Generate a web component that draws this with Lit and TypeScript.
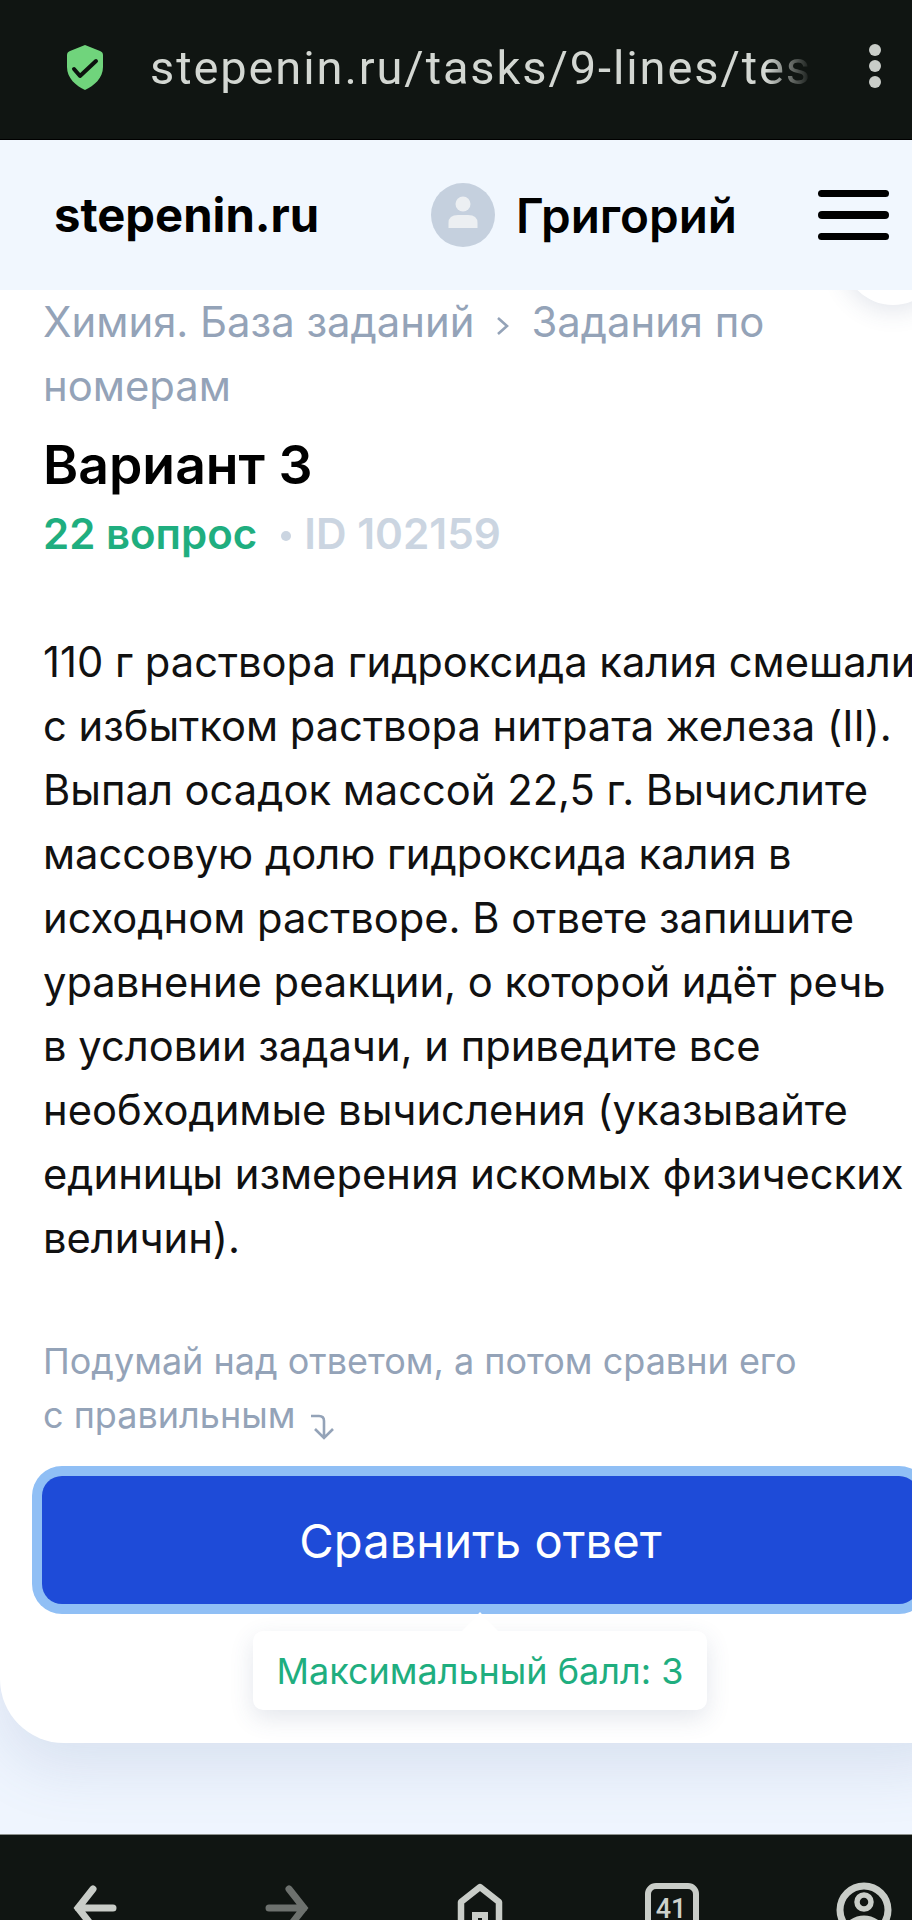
import { LitElement, html, css } from "lit";
import { customElement } from "lit/decorators.js";

@customElement("app-root")
export class AppRoot extends LitElement {
  static styles = css`
    :host { display: block; width: 912px; height: 1920px; overflow: hidden; font-family: Inter, "Noto Sans", sans-serif; background: #eff5fe; }
    .page { display: flex; flex-direction: column; width: 912px; height: 1920px; overflow: hidden; }
    .top { flex: none; height: 140px; box-sizing: border-box; background: #101512; border-bottom: 1px solid #000; display: flex; align-items: center; padding: 0 0 0 67px; position: relative; z-index: 3; }
    .shield { width: 36px; height: 45px; flex: none; margin-top: -4px; }
    .url { margin-left: 47px; width: 662px; overflow: hidden; white-space: nowrap; font: 400 47px/60px Roboto, sans-serif; color: #d3d7d2; letter-spacing: 1.9px; margin-top: -4px;
      -webkit-mask-image: linear-gradient(90deg, #000 93%, transparent 100%); mask-image: linear-gradient(90deg, #000 93%, transparent 100%); }
    .dots { margin-left: 57px; display: flex; flex-direction: column; gap: 4px; margin-top: -8px; }
    .dots i { width: 12px; height: 12px; border-radius: 50%; background: #c9cdc8; display: block; }
    .head { flex: none; height: 150px; box-sizing: border-box; background: #f1f7fe; display: flex; align-items: center; padding: 0 23px 0 54px; position: relative; z-index: 2; color: #000; }
    .logo { font-weight: 700; font-size: 47.2px; flex: none; margin-top: -2px; }
    .user { margin-left: auto; display: flex; align-items: center; gap: 21px; font-weight: 600; font-size: 47.6px; }
    .avatar { width: 64px; height: 64px; border-radius: 50%; background: #c5d0de; }
    .avatar svg { display: block; width: 64px; height: 64px; }
    .burger { margin-left: 81px; width: 71px; display: flex; flex-direction: column; gap: 14px; }
    .burger i { display: block; height: 7.5px; border-radius: 4px; background: #000; }
    .main { flex: 1; min-height: 0; position: relative; }
    .card { position: relative; width: 972px; height: 1453px; box-sizing: border-box; background: #fff; border-radius: 0 0 64px 64px; padding: 0 0 0 43px; box-shadow: 0 24px 60px rgba(100,125,170,.16); white-space: nowrap; }
    .fab { position: absolute; right: 29px; top: -85px; width: 100px; height: 100px; border-radius: 50%; background: #fff; box-shadow: 0 6px 24px rgba(60,80,120,.14); }
    .crumbs { font-size: 41.8px; line-height: 64px; color: #94a3b8; }
    .crumbs svg { width: 14px; height: 22px; margin: 0 21px 0 22px; }
    h1 { margin: 15px 0 0; font-size: 53.5px; line-height: 64px; font-weight: 600; color: #000; }
    .meta { margin-top: 7px; font-size: 42px; line-height: 60px; font-weight: 600; color: #1fae7f; display: flex; align-items: center; }
    .meta i { display: block; width: 10px; height: 10px; border-radius: 50%; background: #cbd5e1; margin: 3px 13px 0 24px; }
    .meta span { color: #cbd5e1; font-size: 42.3px; }
    .task { margin: 66px 0 0; font-size: 41.7px; line-height: 64px; color: #111; font-weight: 400; }
    .hint { margin: 64px 0 0; font-size: 36px; line-height: 54px; color: #94a3b8; }
    .hint svg { width: 26px; height: 26px; vertical-align: -12px; margin-left: 14px; }
    .btn { display: flex; align-items: center; justify-content: center; margin: 34px 0 0 -1px; width: 877px; height: 128px; box-sizing: border-box; border-radius: 20px; background: #1e4bd8; box-shadow: 0 0 0 10px #90bff5; color: #fff; font-size: 47.2px; font-weight: 400; }
    .tip { position: absolute; left: 253px; top: 1341px; width: 454px; height: 79px; box-sizing: border-box; border-radius: 10px; background: #fff; box-shadow: 0 8px 24px rgba(60,80,120,.14); display: flex; align-items: center; justify-content: center; color: #1fae7f; font-size: 36px; }
    .tip::before { content: ""; position: absolute; left: 209px; top: -19px; border: solid transparent; border-width: 0 18px 19px; border-bottom-color: #fff; }
    .bottom { flex: none; height: 86px; box-sizing: border-box; background: #101512; border-top: 1px solid #8d918e; position: relative; z-index: 3; overflow: hidden; }
    .bottom svg { display: block; width: 912px; height: 85px; }
    .num { font: 500 27px Roboto, sans-serif; fill: #cdd1cc; }
  `;

  render() {
    return html`
      <div class="page">
        <div class="top">
          <svg class="shield" viewBox="0 0 36 45">
            <path d="M18 0 L33 6 Q36 7 36 10 V22 C36 33 27 41 18 45 C9 41 0 33 0 22 V10 Q0 7 3 6 Z" fill="#70d47c"/>
            <path d="M7 24 L13 31 L29 16" fill="none" stroke="#0c120e" stroke-width="4" stroke-linecap="round" stroke-linejoin="round"/>
          </svg>
          <div class="url">stepenin.ru/tasks/9-lines/tes</div>
          <div class="dots"><i></i><i></i><i></i></div>
        </div>
        <div class="head">
          <div class="logo">stepenin.ru</div>
          <div class="user">
            <div class="avatar">
              <svg viewBox="0 0 64 64"><circle cx="32" cy="21" r="7.5" fill="#eceff2"/><path d="M17.5 45 V40 Q17.5 32 27 32 H37 Q46.5 32 46.5 40 V45 Z" fill="#eceff2"/></svg>
            </div>
            <span>Григорий</span>
          </div>
          <div class="burger"><i></i><i></i><i></i></div>
        </div>
        <div class="main">
          <div class="card">
            <div class="fab"></div>
            <div class="crumbs">Химия. База заданий<svg viewBox="0 0 14 22"><path d="M2 3 L11 11 L2 19" fill="none" stroke="#94a3b8" stroke-width="2.6"/></svg>Задания по<br>номерам</div>
            <h1>Вариант 3</h1>
            <div class="meta">22 вопрос<i></i><span>ID 102159</span></div>
            <p class="task">110 г раствора гидроксида калия смешали<br>с избытком раствора нитрата железа (II).<br>Выпал осадок массой 22,5 г. Вычислите<br>массовую долю гидроксида калия в<br>исходном растворе. В ответе запишите<br>уравнение реакции, о которой идёт речь<br>в условии задачи, и приведите все<br>необходимые вычисления (указывайте<br>единицы измерения искомых физических<br>величин).</p>
            <div class="hint">Подумай над ответом, а потом сравни его<br>с правильным<svg viewBox="0 0 26 26"><path d="M2 2 H10 Q15 2 15 7 V23 M6 15 L15 24 L24 15" fill="none" stroke="#94a3b8" stroke-width="2.6"/></svg></div>
            <div class="btn">Сравнить ответ</div>
            <div class="tip">Максимальный балл: 3</div>
          </div>
        </div>
        <div class="bottom">
          <svg viewBox="0 0 912 85">
            <g fill="none" stroke-linecap="round">
              <path d="M78 73 H113 M93 54 L78 73 L93 92" stroke="#c9cdc8" stroke-width="7"/>
              <path d="M269 73 H304 M289 54 L304 73 L289 92" stroke="#6d716e" stroke-width="7"/>
              <path d="M461 110 V67 L480 52 L499 67 V110" stroke="#c9cdc8" stroke-linejoin="round" stroke-width="6.5"/>
              <rect x="475" y="80" width="10" height="30" stroke="#c9cdc8" stroke-width="6"/>
              <rect x="648" y="51" width="48" height="70" rx="8" stroke="#c9cdc8" stroke-width="6"/>
              <circle cx="864" cy="75" r="24" stroke="#c9cdc8" stroke-width="7"/>
              <circle cx="864" cy="67" r="7" stroke="#c9cdc8" stroke-width="5.5"/>
              <path d="M846 92 Q864 76 882 92" stroke="#c9cdc8" stroke-width="6.5"/>
            </g>
            <text x="671" y="83" text-anchor="middle" class="num">41</text>
          </svg>
        </div>
      </div>
    `;
  }
}
